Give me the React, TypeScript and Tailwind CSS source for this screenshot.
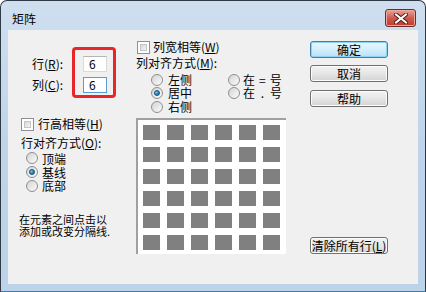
import React from 'react'

const font = { fontFamily: '"Noto Sans CJK SC", "Liberation Sans", sans-serif' }

function Radio({ checked = false }: { checked?: boolean }) {
  return (
    <span className="w-[12px] h-[12px] rounded-full border border-[#8f8f8f] bg-gradient-to-br from-[#d4d4d4] to-[#fbfbfb] flex items-center justify-center shrink-0">
      {checked && (
        <span className="w-[6px] h-[6px] rounded-full bg-[radial-gradient(circle_at_35%_35%,#6fd0ff,#1a6aa6_70%)] border border-[#1c4f7a]" />
      )}
    </span>
  )
}

function Check() {
  return (
    <span className="w-[13px] h-[13px] border border-[#8f8f8f] bg-white p-[2px] shrink-0 flex">
      <span className="flex-1 bg-gradient-to-br from-[#d8d8d8] to-[#f4f4f4] border border-[#c4c4c4]" />
    </span>
  )
}

function Button({ children, primary = false }: { children: React.ReactNode; primary?: boolean }) {
  return (
    <div
      className={
        'w-[78px] h-[17px] rounded-[3px] border flex items-center justify-center text-[12px] leading-none text-black ' +
        (primary
          ? 'border-[#3c7fb1] bg-gradient-to-b from-[#e9f6fd] via-[#d6eefc] to-[#b6e0f8] shadow-[inset_0_0_0_1px_#8cd3f4]'
          : 'border-[#707070] bg-gradient-to-b from-[#f3f3f3] via-[#e6e6e6] to-[#d3d3d3] shadow-[inset_0_0_0_1px_#fcfcfc]')
      }
    >
      {children}
    </div>
  )
}

export default function App() {
  const cells = Array.from({ length: 36 })

  return (
    <div className="w-[426px] h-[292px] bg-white text-black" style={font}>
      <div className="w-full h-full rounded-t-[7px] border border-[#2f3b44] border-b-[#1a8fb0] bg-gradient-to-b from-[#cfdff0] via-[#bfd4ea] to-[#bcd3ea] flex flex-col">
        {/* title bar */}
        <div className="h-[29px] flex items-start shrink-0">
          <span className="ml-[11px] mt-[11px] text-[12px] leading-[14px] text-black">矩阵</span>
          <div className="ml-auto mr-[9px] mt-[8px] w-[31px] h-[18px] rounded-[3px] border border-[#6e2a26] bg-gradient-to-b from-[#e8a49a] via-[#cf5a4c] to-[#c03a2b] flex items-center justify-center shadow-[inset_0_0_0_1px_#eea99f]">
            <svg width="14" height="11" viewBox="0 0 14 11">
              <path d="M2 1.5 L12 9.5 M12 1.5 L2 9.5" stroke="#4a1a16" strokeWidth="4" strokeLinecap="square" />
              <path d="M2 1.5 L12 9.5 M12 1.5 L2 9.5" stroke="#ffffff" strokeWidth="2" strokeLinecap="square" />
            </svg>
          </div>
        </div>

        {/* client area */}
        <div className="mx-[7px] mb-[7px] flex-1 bg-[#f0f0f0] flex text-[12px] leading-[14px] whitespace-nowrap">
          {/* left column */}
          <div className="w-[128px] shrink-0 flex flex-col">
            <div className="flex mt-[17px]">
              <div className="ml-[24px] w-[40px] flex flex-col pt-[9px] gap-[5px]">
                <span className="h-[16px] leading-[16px]">行(<u>R</u>):</span>
                <span className="h-[16px] leading-[16px]">列(<u>C</u>):</span>
              </div>
              <div className="w-[44px] h-[51px] border-[3px] border-[#e8262a] rounded-[4px] pl-[8px] pt-[6px] flex flex-col gap-[5px]">
                <div className="w-[24px] h-[16px] bg-white border border-[#d9d9d9] border-t-[#b5b5b5] pl-[5px] leading-[14px]">6</div>
                <div className="w-[24px] h-[16px] bg-white border border-[#5b9bd5] pl-[5px] leading-[14px]">6</div>
              </div>
            </div>

            <div className="flex items-center gap-[4px] ml-[13px] mt-[19px] h-[14px]">
              <Check />
              <span>行高相等(<u>H</u>)</span>
            </div>
            <div className="ml-[13px] mt-[5px]">行对齐方式(<u>O</u>):</div>
            <div className="ml-[18px] mt-[1px] flex flex-col leading-[13px]">
              <div className="flex items-center gap-[4px] h-[14px]"><Radio /><span>顶端</span></div>
              <div className="flex items-center gap-[4px] h-[14px]"><Radio checked /><span>基线</span></div>
              <div className="flex items-center gap-[4px] h-[13px]"><Radio /><span>底部</span></div>
            </div>
            <div className="ml-[11px] mt-[21px] text-[11px] leading-[12px]">
              在元素之间点击以
              <br />
              添加或改变分隔线.
            </div>
          </div>

          {/* middle column */}
          <div className="w-[150px] shrink-0 flex flex-col">
            <div className="flex items-center gap-[3px] ml-[1px] mt-[10px] h-[14px]">
              <Check />
              <span>列宽相等(<u>W</u>)</span>
            </div>
            <div className="mt-[2px]">列对齐方式(<u>M</u>):</div>
            <div className="flex mt-[3px] leading-[12px]">
              <div className="ml-[15px] shrink-0 flex flex-col">
                <div className="flex items-center gap-[5px] h-[13px]"><Radio /><span>左侧</span></div>
                <div className="flex items-center gap-[5px] h-[13px]"><Radio checked /><span>居中</span></div>
                <div className="flex items-center gap-[5px] h-[14px] mt-[1px]"><Radio /><span>右侧</span></div>
              </div>
              <div className="ml-[36px] shrink-0 flex flex-col">
                <div className="flex items-center gap-[3px] h-[13px]">
                  <Radio />
                  <span className="flex gap-[4px]"><span>在</span><span>=</span><span>号</span></span>
                </div>
                <div className="flex items-center gap-[3px] h-[13px]">
                  <Radio />
                  <span className="flex gap-[4px]"><span>在</span><span className="w-[7px] text-center">.</span><span>号</span></span>
                </div>
              </div>
            </div>
            <div className="mt-[4px] w-[150px] h-[136px] bg-white border-t-2 border-l-2 border-t-[#a0a0a0] border-l-[#a0a0a0] pl-[5px] pt-[5px]">
              <div className="grid grid-cols-[repeat(6,17px)] auto-rows-[15px] gap-x-[7px] gap-y-[7px]">
                {cells.map((_, i) => (
                  <div key={i} className="bg-[#808080]" />
                ))}
              </div>
            </div>
          </div>

          {/* right column */}
          <div className="ml-[24px] flex flex-col pt-[11px]">
            <Button primary>确定</Button>
            <div className="mt-[7px]"><Button>取消</Button></div>
            <div className="mt-[8px]"><Button>帮助</Button></div>
            <div className="mt-[130px]"><Button>清除所有行(<u>L</u>)</Button></div>
          </div>
        </div>
      </div>
    </div>
  )
}
